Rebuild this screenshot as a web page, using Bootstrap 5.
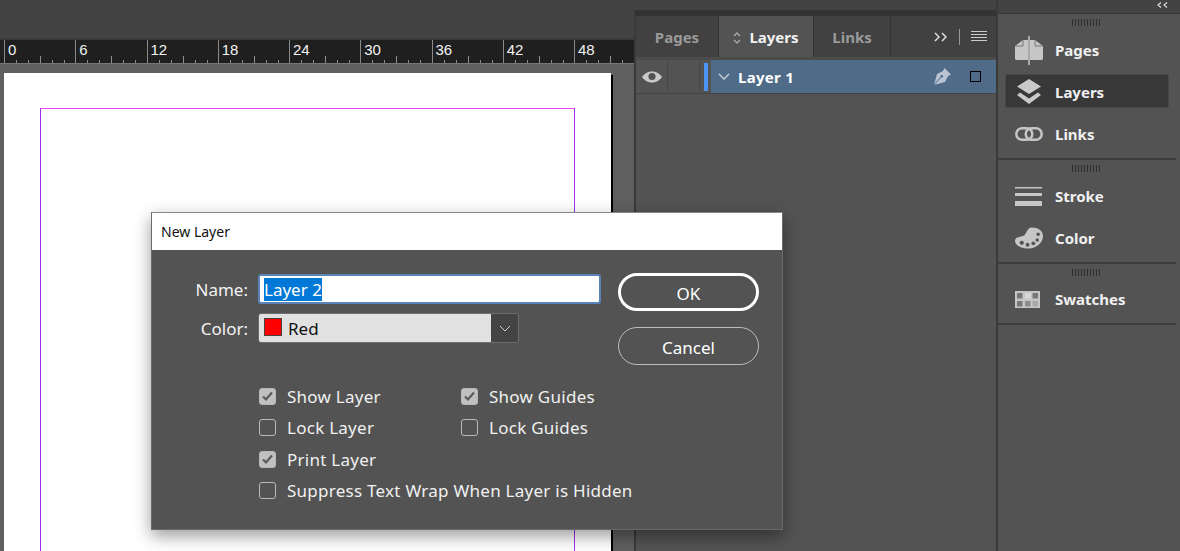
<!DOCTYPE html>
<html lang="en">
<head>
<meta charset="utf-8">
<title>New Layer</title>
<link href="https://cdn.jsdelivr.net/npm/bootstrap@5.3.0/dist/css/bootstrap.min.css" rel="stylesheet">
<style>
html,body{height:551px;overflow:hidden;}
body{background:#434343;font-family:"Noto Sans","Open Sans",sans-serif;color:#fff;position:relative;}
.shell{height:551px;}
.canvas-col{width:634px;flex:none;overflow:hidden;}
.top-strip{height:40px;flex:none;background:#434343;border-bottom:2px solid #3a3a3a;}
.ruler{height:24px;flex:none;background:#1f1f1f;padding-left:4px;border-bottom:1px solid #777;}
.ruler-cell{width:71.25px;flex:none;height:23px;border-left:1px solid #8a8a8a;padding-left:3px;font:15px/20px "Liberation Sans",sans-serif;color:#f2f2f2;
background-image:repeating-linear-gradient(90deg,transparent 0 11px,#8f8f8f 11px 12px),linear-gradient(90deg,transparent 35px,#8f8f8f 35px 36px,transparent 36px);
background-size:71.25px 3px,71.25px 7px;background-position:0 100%,0 100%;background-repeat:no-repeat;}
.workspace{flex:1;background:#5f5f5f;padding:9px 0 0 4px;}
.sheet{width:607px;height:500px;background:#fff;padding:35px 36px 0;box-shadow:2px 2px 0 #000;}
.guide{height:500px;width:535px;border:1px solid #f046f6;border-right-color:#a030f0;border-left-color:#a030f0;}
.layers-panel{width:362px;flex:none;background:#535353;border-left:2px solid #3a3a3a;margin-top:10px;border-top:6px solid #333;}
.tabbar{height:44px;flex:none;background:#414141;border-bottom:3px solid #4b4b4b;}
.ptab{height:41px;padding-top:2px;font-size:15px;font-weight:700;color:#9a9a9a;border-right:1px solid #333;}
.ptab-on{background:#535353;color:#f2f2f2;}
.tab-pages{width:83px;}.tab-layers{width:95px;}.tab-links{width:77px;}
.tab-tools{gap:11px;padding-right:9px;}
.layer-row{height:34px;flex:none;border-bottom:1px solid #444;}
.vis-cell{width:32px;height:33px;border-right:1px solid #484848;}
.swatch-bar{width:4px;height:28px;background:#4c95f5;margin:3px 0 0 4px;display:block;}
.layer-sel{background:#4f6b88;height:33px;font-size:15px;font-weight:700;letter-spacing:.3px;padding:0 15px 0 7px;margin-left:3px;}
.layer-name{padding-top:2px;}
.layer-pen{margin-right:19px;}
.dock{flex:1;background:#535353;border-left:2px solid #3a3a3a;}
.dock-top{height:14px;background:#434343;border-bottom:1px solid #333;padding:2px 12px 0 0;}
.grip{height:7px;width:28px;margin:5px 0 0 74px;background:repeating-linear-gradient(90deg,#2f2f2f 0 1px,transparent 1px 3px);}
.dock-sec{border-bottom:2px solid #3c3c3c;padding-bottom:7px;margin-right:4px;}
.dock-item{height:34px;margin:7px 7px 0 7px;padding-left:9px;gap:12px;font-size:15px;font-weight:700;color:#f0f0f0;border:1px solid transparent;border-radius:2px;}
.dock-on{background:#383838;border-color:#494949;padding-top:2px;}
.dock-links{margin-top:9px;}
.dock-color{margin-top:8px;}
.dock-swatches{margin-top:6px;}
.dock-ico{width:28px;flex:none;display:block;}
.dlg{position:absolute;left:151px;top:212px;width:632px;height:318px;background:#535353;border:1px solid #6a6a6a;border-top-color:#888;box-shadow:0 6px 16px rgba(0,0,0,.4);}
.dlg-title{height:37px;background:#fff;color:#111;font:14px/37px "Noto Sans",sans-serif;padding-left:9px;}
.dlg-body{padding:24px 22px 0 0;font-size:17px;}
.dlg-form{width:449px;flex:none;}
.lab{width:106px;padding:1px 10px 0 0;margin:0;text-align:right;color:#f2f2f2;}
.name-input.form-control{width:343px;height:30px;padding:1px 4px 0;border:2px solid #5a84b8;border-radius:3px;background:#fff;font-size:17px;line-height:25px;}
.sel-text{background:#0078d7;color:#fff;}
.color-row{margin-top:9px;}
.color-sel{width:261px;height:30px;border:1px solid #6d6d6d;border-radius:3px;overflow:hidden;}
.color-val{flex:1;background:#e1e1e1;color:#111;padding:1px 0 0 5px;gap:6px;}
.chip{width:18px;height:18px;margin-top:-3px;background:#f00;border:1px solid #444;display:block;}
.color-arrow{width:27px;background:#444;}
.dlg-actions{width:141px;flex:none;margin:-1px 0 0 17px;gap:16px;}
.dbtn.btn{width:141px;height:38px;border-radius:19px;color:#fff;background:transparent;font-size:17px;padding:3px 0 0;}
.dbtn-primary.btn{border:3px solid #fff;}
.dbtn-cancel.btn{border:1px solid #bdbdbd;}
.checks{margin:15.5px 0 0 107px;font-size:17px;letter-spacing:.26px;}
.chk-row{height:31.5px;color:#f0f0f0;}
.chk-col{width:202px;}
.box{width:17px;height:17px;flex:none;margin-right:11px;border:1px solid #b8b8b8;border-radius:3px;display:block;}
.box svg{display:block;}
.box-on{background:#c0c0c0;}
</style>
</head>
<body>
<div class="shell d-flex">
  <div class="canvas-col d-flex flex-column">
    <div class="top-strip"></div>
    <div class="ruler d-flex">
      <div class="ruler-cell">0</div><div class="ruler-cell">6</div><div class="ruler-cell">12</div><div class="ruler-cell">18</div><div class="ruler-cell">24</div><div class="ruler-cell">30</div><div class="ruler-cell">36</div><div class="ruler-cell">42</div><div class="ruler-cell">48</div>
    </div>
    <div class="workspace"><div class="sheet"><div class="guide"></div></div></div>
  </div>

  <div class="layers-panel d-flex flex-column">
    <div class="tabbar d-flex">
      <div class="ptab tab-pages d-flex align-items-center justify-content-center">Pages</div>
      <div class="ptab ptab-on tab-layers d-flex align-items-center justify-content-center gap-2">
        <svg width="8" height="14" viewBox="0 0 8 14" fill="none" stroke="#aaa" stroke-width="1.3"><path d="M1 5l3-3 3 3M1 9l3 3 3-3"/></svg>Layers</div>
      <div class="ptab tab-links d-flex align-items-center justify-content-center">Links</div>
      <div class="tab-tools ms-auto d-flex align-items-center">
        <svg width="14" height="10" viewBox="0 0 14 10" fill="none" stroke="#e6e6e6" stroke-width="1.4"><path d="M1 1l4 4-4 4M8 1l4 4-4 4"/></svg>
        <svg width="1" height="16"><rect width="1" height="16" fill="#999"/></svg>
        <svg width="16" height="11"><path d="M0 .5h16M0 3.5h16M0 6.5h16M0 9.5h16" stroke="#ccc"/></svg>
      </div>
    </div>
    <div class="layer-row d-flex">
      <div class="vis-cell d-flex align-items-center justify-content-center">
        <svg width="20" height="12" viewBox="0 0 20 12"><path d="M0 6C3 2 6 .5 10 .5S17 2 20 6c-3 4-6 5.500-10 5.500S3 10 0 6z" fill="#c9c9c9"/><circle cx="10" cy="5.500" r="3.600" fill="#535353"/></svg>
      </div>
      <div class="vis-cell"></div>
      <span class="swatch-bar"></span>
      <div class="layer-sel flex-grow-1 d-flex align-items-center">
        <svg class="me-2" width="12" height="7" viewBox="0 0 12 7" fill="none" stroke="#c8d3df" stroke-width="1.3"><path d="M1 1l5 5 5-5"/></svg>
        <span class="layer-name">Layer 1</span>
        <svg class="ms-auto layer-pen" width="17" height="17" viewBox="0 0 17 17"><path d="M0 17L3 6l6-3 1.500-3L17 6.500 14 8l-3 6z" fill="#b8c4d1"/><path d="M0 17l7-8" stroke="#4f6b88"/><circle cx="7.800" cy="8.200" r="1.300" fill="#4f6b88"/></svg>
        <svg width="11" height="11"><rect x=".5" y=".5" width="10" height="10" fill="none" stroke="#000"/></svg>
      </div>
    </div>
  </div>

  <div class="dock">
    <div class="dock-top d-flex justify-content-end">
      <svg width="11" height="6" viewBox="0 0 11 6" fill="none" stroke="#ddd" stroke-width="1.200"><path d="M4 .5L1 3l3 2.500M10 .5L7 3l3 2.500"/></svg>
    </div>
    <div class="dock-sec">
      <div class="grip"></div>
      <div class="dock-item d-flex align-items-center">
        <svg class="dock-ico" height="29" viewBox="0 0 28 29"><path d="M0 10l8-6h5v20H1l-1-1zM28 10l-8-6h-5v20h12l1-1z" fill="#c6c6c6"/><path d="M14 0v29" stroke="#c6c6c6" stroke-width="1.500"/><path d="M8 4v6H0M20 4v6h8" fill="none" stroke="#777"/></svg>Pages</div>
      <div class="dock-item dock-on d-flex align-items-center">
        <svg class="dock-ico" height="26" viewBox="0 0 28 26"><path d="M14 0l12 7.500L14 15 2 7.500z" fill="#c9c9c9"/><path d="M5 13.500l-3 2.500 12 9 12-9-3-2.500-9 6z" fill="#c9c9c9"/></svg>Layers</div>
      <div class="dock-item dock-links d-flex align-items-center">
        <svg class="dock-ico" height="14" viewBox="0 0 28 14" fill="none" stroke="#c6c6c6" stroke-width="2.500"><rect x="1.300" y="1.300" width="16" height="11.400" rx="5.700"/><rect x="10.700" y="1.300" width="16" height="11.400" rx="5.700"/></svg>Links</div>
    </div>
    <div class="dock-sec">
      <div class="grip"></div>
      <div class="dock-item d-flex align-items-center">
        <svg class="dock-ico" height="19" viewBox="0 0 28 19" fill="#c6c6c6"><rect width="27" height="1.500"/><rect y="6" width="27" height="3"/><rect y="14" width="27" height="5"/></svg>Stroke</div>
      <div class="dock-item dock-color d-flex align-items-center">
        <svg class="dock-ico" height="22" viewBox="0 0 29 22"><path d="M17 0c7 0 12 3 12 9 0 7-7 13-15 13C6 22 0 18 0 14c0-4 5-4 8-5 3-1 3-3 5-6 1-2 2-3 4-3z" fill="#c6c6c6"/><g fill="#555"><circle cx="7" cy="16" r="2.200"/><circle cx="13" cy="18" r="2"/><circle cx="19" cy="16.500" r="2"/><circle cx="23" cy="13" r="1.800"/><circle cx="24" cy="7" r="1.800"/></g></svg>Color</div>
    </div>
    <div class="dock-sec">
      <div class="grip"></div>
      <div class="dock-item dock-swatches d-flex align-items-center">
        <svg class="dock-ico" height="17" viewBox="0 0 28 17"><rect width="25" height="17" fill="#c6c6c6"/><g fill="#777"><rect x="2" y="2" width="5.500" height="5.500"/><rect x="17.500" y="2" width="5.500" height="5.500"/><rect x="2" y="10" width="5.500" height="5.500"/></g><rect x="10" y="10" width="5.500" height="5.500" fill="#8c8c8c"/><rect x="10" y="2" width="5.500" height="5.500" fill="#d8d8d8"/><rect x="17.500" y="10" width="5.500" height="5.500" fill="#a8a8a8"/></svg>Swatches</div>
    </div>
  </div>
</div>

<div class="dlg">
  <div class="dlg-title">New Layer</div>
  <div class="dlg-body d-flex">
    <div class="dlg-form">
      <div class="d-flex align-items-center">
        <label class="lab" for="nm">Name:</label>
        <div class="form-control name-input" id="nm"><span class="sel-text">Layer 2</span></div>
      </div>
      <div class="color-row d-flex align-items-center">
        <span class="lab">Color:</span>
        <div class="color-sel d-flex">
          <div class="color-val d-flex align-items-center"><span class="chip"></span>Red</div>
          <div class="color-arrow d-flex align-items-center justify-content-center">
            <svg width="12" height="7" viewBox="0 0 12 7" fill="none" stroke="#ccc"><path d="M1 1l5 5 5-5"/></svg>
          </div>
        </div>
      </div>
    </div>
    <div class="dlg-actions d-flex flex-column">
      <button class="btn dbtn dbtn-primary" type="button">OK</button>
      <button class="btn dbtn dbtn-cancel" type="button">Cancel</button>
    </div>
  </div>
  <div class="checks">
    <div class="chk-row d-flex align-items-center">
      <div class="chk-col d-flex align-items-center"><span class="box box-on"><svg width="15" height="15" viewBox="0 0 15 15" fill="none" stroke="#5a5a5a" stroke-width="2.200"><path d="M3 7.500l3 3 6-7"/></svg></span>Show Layer</div>
      <div class="chk-col d-flex align-items-center"><span class="box box-on"><svg width="15" height="15" viewBox="0 0 15 15" fill="none" stroke="#5a5a5a" stroke-width="2.200"><path d="M3 7.500l3 3 6-7"/></svg></span>Show Guides</div>
    </div>
    <div class="chk-row d-flex align-items-center">
      <div class="chk-col d-flex align-items-center"><span class="box"></span>Lock Layer</div>
      <div class="chk-col d-flex align-items-center"><span class="box"></span>Lock Guides</div>
    </div>
    <div class="chk-row d-flex align-items-center">
      <div class="chk-col d-flex align-items-center"><span class="box box-on"><svg width="15" height="15" viewBox="0 0 15 15" fill="none" stroke="#5a5a5a" stroke-width="2.200"><path d="M3 7.500l3 3 6-7"/></svg></span>Print Layer</div>
    </div>
    <div class="chk-row d-flex align-items-center">
      <span class="box"></span>Suppress Text Wrap When Layer is Hidden
    </div>
  </div>
</div>
</body>
</html>
